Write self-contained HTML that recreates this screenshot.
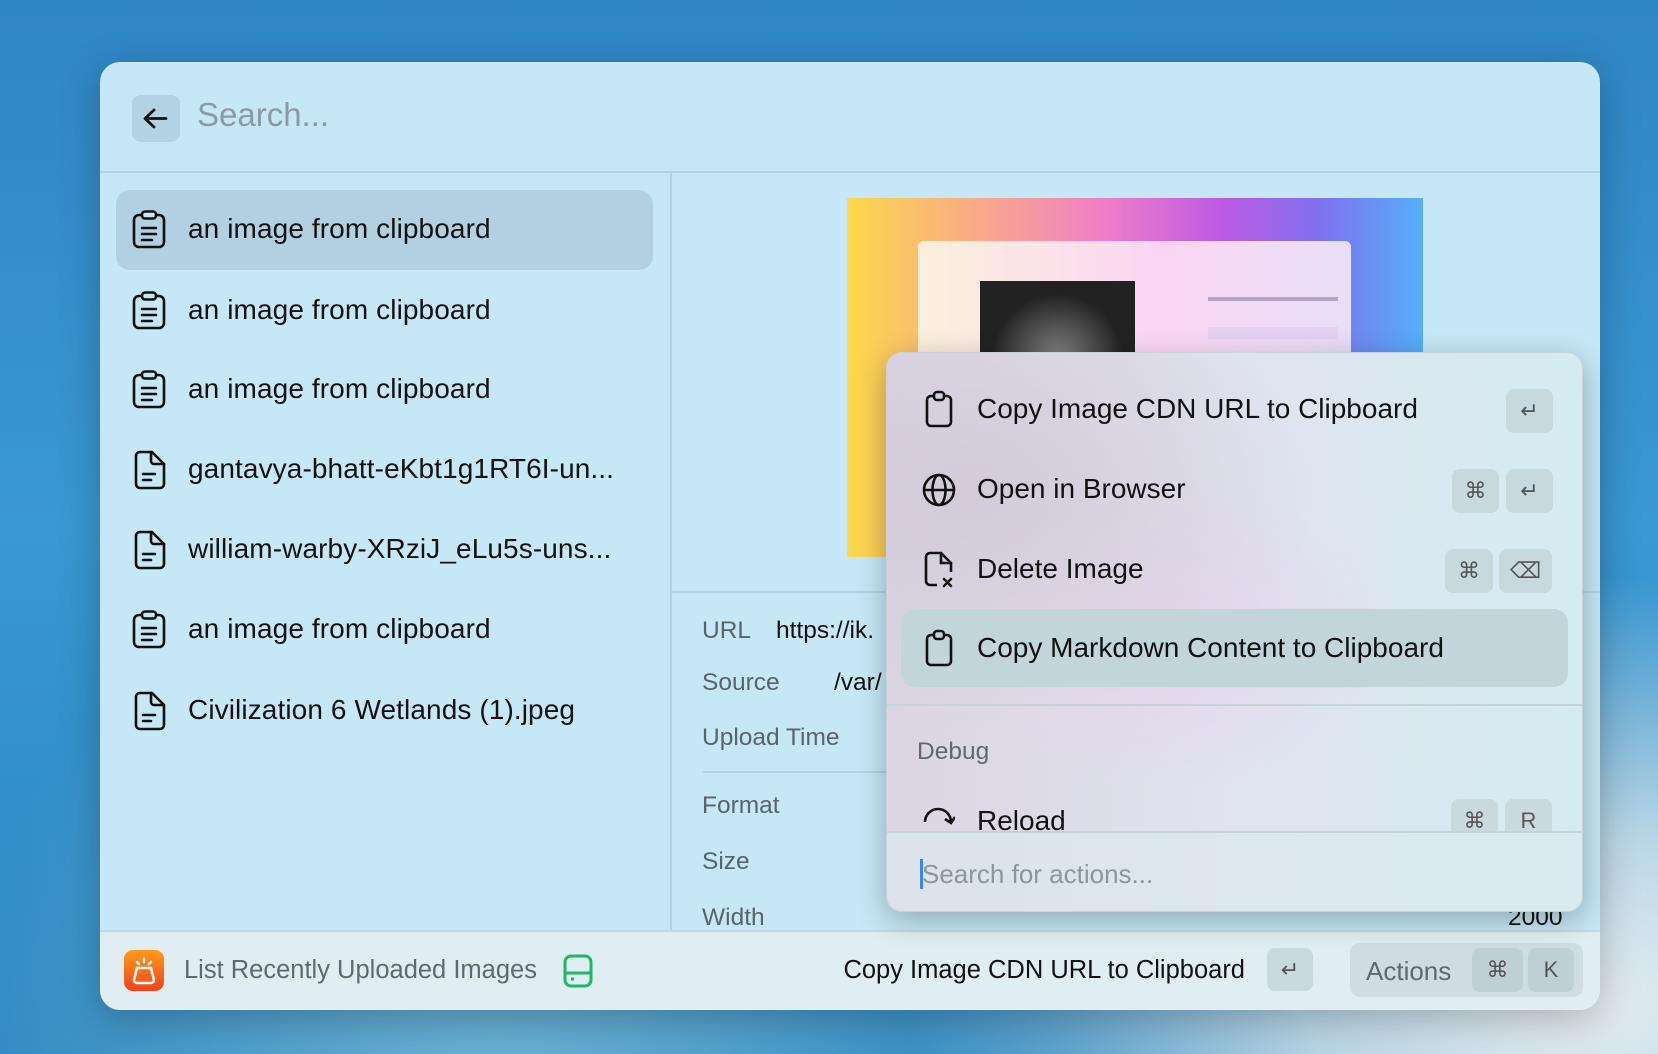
<!DOCTYPE html>
<html><head><meta charset="utf-8"><style>
*{box-sizing:border-box;margin:0;padding:0}
body{width:1658px;height:1054px;overflow:hidden;font-family:"Liberation Sans",sans-serif;position:relative;
background:radial-gradient(ellipse at 95% 95%,#e8eef2 0,#b9d6e6 12%,transparent 30%),radial-gradient(ellipse at 30% 105%,#6fb4d6 0,transparent 35%),linear-gradient(180deg,#2f86c4 0%,#3a98d2 50%,#2a86c0 100%)}
.abs{position:absolute}
.win{left:100px;top:62px;width:1500px;height:948px;border-radius:20px;background:#c6e7f6;overflow:hidden;box-shadow:0 10px 40px rgba(0,0,0,.25)}
.hdr{left:0;top:0;width:1500px;height:111px;border-bottom:2px solid #b2d3e2}
.back{left:32px;top:33px;width:48px;height:47px;border-radius:9px;background:#b2d3e3}
.search{left:97px;top:34px;font-size:33px;color:#8a9ba5}
.vdiv{left:570px;top:111px;width:2px;height:760px;background:#b2d3e2}
.item{position:absolute;left:16px;width:537px;height:80px}
.item.sel{background:#b2d0e1;border-radius:14px}
.item svg{position:absolute;left:16px;top:20px}
.item span{position:absolute;left:72px;top:23px;font-size:28px;color:#111;letter-spacing:.1px}
.lbl{font-size:24.5px;color:#58646b;position:absolute}
.val{font-size:24.5px;color:#111;position:absolute}
.foot{left:0;top:868px;width:1500px;height:80px;background:#e0eef3;border-top:2px solid #c4d8e0}
.kbd{position:absolute;background:#c9d9de;border-radius:8px;color:#555;font-size:22px;text-align:center}
.pop{left:886px;top:352px;width:697px;height:560px;border-radius:16px;overflow:hidden;
background:radial-gradient(ellipse at 12% 25%,#d3cbd8 0,transparent 40%),radial-gradient(ellipse at 40% 50%,#e6d6ec 0,transparent 40%),linear-gradient(90deg,#dcd5e2 0%,#e0e3f0 50%,#d4ecf1 100%);
box-shadow:0 8px 30px rgba(0,0,0,.28);border:1px solid #c7d3da}
.pi{position:absolute;left:14px;width:667px;height:78px}
.pi svg{position:absolute;left:20px;top:20px}
.pi span{position:absolute;left:76px;top:23px;font-size:28px;color:#111}
.pk{position:absolute;top:19px;height:44px;background:#c7d9dc;border-radius:8px;color:#555;font-size:22px;text-align:center;line-height:44px}
</style></head><body>
<div class="abs win">
 <div class="abs hdr">
  <div class="abs back"><svg width="48" height="47" viewBox="0 0 48 47"><path d="M34 23.5H14M22 15l-9 8.5 9 8.5" stroke="#111" stroke-width="2.8" fill="none" stroke-linecap="round" stroke-linejoin="round"/></svg></div>
  <div class="abs search">Search...</div>
 </div>
 <div class="abs vdiv"></div>
 <div class="abs" style="left:0;top:0">
  <svg width="0" height="0" style="position:absolute"><defs>
   <g id="clip"><rect x="2" y="5" width="30" height="32" rx="5" stroke="#111" stroke-width="2.6" fill="none"/><rect x="10" y="1.5" width="14" height="7" rx="3" stroke="#111" stroke-width="2.6" fill="#c6e7f6"/><path d="M10 18h14M10 24h14M10 30h10" stroke="#111" stroke-width="2.6" stroke-linecap="round"/></g>
   <g id="file"><path d="M4 6a4 4 0 0 1 4-4h12l12 12v20a4 4 0 0 1-4 4H8a4 4 0 0 1-4-4z" stroke="#111" stroke-width="2.6" fill="none" stroke-linejoin="round"/><path d="M19 2v9a3 3 0 0 0 3 3h10M11 24h12M11 30h8" stroke="#111" stroke-width="2.6" fill="none" stroke-linecap="round"/></g>
  </defs></svg>
  <div class="item sel" style="top:128px"><svg width="36" height="40"><use href="#clip"/></svg><span>an image from clipboard</span></div>
  <div class="item" style="top:209px"><svg width="36" height="40"><use href="#clip"/></svg><span>an image from clipboard</span></div>
  <div class="item" style="top:288px"><svg width="36" height="40"><use href="#clip"/></svg><span>an image from clipboard</span></div>
  <div class="item" style="top:368px"><svg width="36" height="40"><use href="#file"/></svg><span>gantavya-bhatt-eKbt1g1RT6I-un...</span></div>
  <div class="item" style="top:448px"><svg width="36" height="40"><use href="#file"/></svg><span>william-warby-XRziJ_eLu5s-uns...</span></div>
  <div class="item" style="top:528px"><svg width="36" height="40"><use href="#clip"/></svg><span>an image from clipboard</span></div>
  <div class="item" style="top:609px"><svg width="36" height="40"><use href="#file"/></svg><span>Civilization 6 Wetlands (1).jpeg</span></div>
 </div>
 <div class="abs" style="left:747px;top:136px;width:576px;height:359px;background:linear-gradient(90deg,#fcd94a 0%,#f8a58f 25%,#ee7ec8 45%,#bd5ae4 65%,#7f72ee 82%,#55aefa 100%)">
  <div class="abs" style="left:71px;top:43px;width:433px;height:140px;border-radius:6px;background:linear-gradient(90deg,#fbf0dc,#fbd6f4 55%,#e8def6)">
   <div class="abs" style="left:62px;top:40px;width:155px;height:100px;background:radial-gradient(circle at 50% 80%,#888,#222 60%)"></div>
   <div class="abs" style="left:290px;top:56px;width:130px;height:4px;background:#b7a4c8"></div>
   <div class="abs" style="left:290px;top:86px;width:130px;height:12px;background:#e4d0ef"></div>
  </div>
 </div>
 <div class="abs" style="left:572px;top:529px;width:928px;height:2px;background:#b2d3e2"></div>
 <div class="lbl" style="left:602px;top:555px">URL</div><div class="val" style="left:676px;top:555px">https://ik.</div>
 <div class="lbl" style="left:602px;top:607px">Source</div><div class="val" style="left:734px;top:607px">/var/</div>
 <div class="lbl" style="left:602px;top:662px">Upload Time</div>
 <div class="abs" style="left:602px;top:709px;width:200px;height:2px;background:#b2d3e2"></div>
 <div class="lbl" style="left:602px;top:730px">Format</div>
 <div class="lbl" style="left:602px;top:786px">Size</div>
 <div class="lbl" style="left:602px;top:842px">Width</div><div class="val" style="left:1408px;top:842px">2000</div>
 <div class="abs foot">
  <div class="abs" style="left:24px;top:18px;width:40px;height:41px;border-radius:9px;background:linear-gradient(180deg,#ff9a1a,#f4431c)">
   <svg width="40" height="41"><path d="M13 18h14l3 12a3 3 0 0 1-3 3H13a3 3 0 0 1-3-3z" stroke="#fff" stroke-width="2.5" fill="none"/><path d="M20 9v3M13 12l2 2M27 12l-2 2" stroke="#fff" stroke-width="2.5" stroke-linecap="round"/></svg>
  </div>
  <div class="abs" style="left:84px;top:24px;font-size:25.5px;color:#5e6a70">List Recently Uploaded Images</div>
  <svg class="abs" style="left:463px;top:22px" width="30" height="34"><rect x="2" y="2" width="26" height="30" rx="6" stroke="#1fb766" stroke-width="3" fill="none"/><path d="M2 19h26M8 25h3" stroke="#1fb766" stroke-width="3"/></svg>
  <div class="abs" style="left:700px;top:24px;font-size:25.5px;color:#111;width:445px;text-align:right">Copy Image CDN URL to Clipboard</div>
  <div class="kbd" style="left:1167px;top:16px;width:46px;height:43px;line-height:43px">↵</div>
  <div class="abs" style="left:1250px;top:11px;width:233px;height:54px;border-radius:10px;background:#cfdde2">
   <div class="abs" style="left:16px;top:13px;font-size:26px;color:#5e6a70">Actions</div>
   <div class="kbd" style="left:122px;top:5px;width:51px;height:44px;line-height:44px;background:#bfd0d5">⌘</div>
   <div class="kbd" style="left:178px;top:5px;width:46px;height:44px;line-height:44px;background:#bfd0d5">K</div>
  </div>
 </div>
</div>
<div class="abs pop">
 <div class="pi" style="top:17px"><svg width="36" height="40"><path d="M6 10a4 4 0 0 1 4-4h4M22 6h4a4 4 0 0 1 4 4v22a4 4 0 0 1-4 4H10a4 4 0 0 1-4-4V10" stroke="#111" stroke-width="2.6" fill="none"/><rect x="13" y="2" width="10" height="8" rx="3" stroke="#111" stroke-width="2.6" fill="none"/></svg><span>Copy Image CDN URL to Clipboard</span><div class="pk" style="left:605px;width:47px">↵</div></div>
 <div class="pi" style="top:97px"><svg width="36" height="40"><circle cx="18" cy="20" r="15" stroke="#111" stroke-width="2.6" fill="none"/><ellipse cx="18" cy="20" rx="6.5" ry="15" stroke="#111" stroke-width="2.6" fill="none"/><path d="M3 20h30" stroke="#111" stroke-width="2.6"/></svg><span>Open in Browser</span><div class="pk" style="left:551px;width:47px">⌘</div><div class="pk" style="left:605px;width:47px">↵</div></div>
 <div class="pi" style="top:177px"><svg width="36" height="40"><path d="M16 35H9a4 4 0 0 1-4-4V7a4 4 0 0 1 4-4h11l10 10v9" stroke="#111" stroke-width="2.6" fill="none" stroke-linejoin="round"/><path d="M20 3v10h10M23 29l7 7M30 29l-7 7" stroke="#111" stroke-width="2.6" fill="none" stroke-linecap="round"/></svg><span>Delete Image</span><div class="pk" style="left:544px;width:48px">⌘</div><div class="pk" style="left:598px;width:53px">⌫</div></div>
 <div class="pi" style="top:256px;background:#c2d5db;border-radius:14px"><svg width="36" height="40"><path d="M6 10a4 4 0 0 1 4-4h4M22 6h4a4 4 0 0 1 4 4v22a4 4 0 0 1-4 4H10a4 4 0 0 1-4-4V10" stroke="#111" stroke-width="2.6" fill="none"/><rect x="13" y="2" width="10" height="8" rx="3" stroke="#111" stroke-width="2.6" fill="none"/></svg><span>Copy Markdown Content to Clipboard</span></div>
 <div class="abs" style="left:0;top:351px;width:697px;height:2px;background:#c3d3d8"></div>
 <div class="abs" style="left:30px;top:385px;font-size:24.5px;color:#5e6a70">Debug</div>
 <div class="abs" style="left:0;top:440px;width:697px;height:38px;overflow:hidden">
  <svg class="abs" style="left:34px;top:12px" width="34" height="34"><path d="M4 17a13 13 0 1 1 26 0" stroke="#111" stroke-width="2.6" fill="none"/><path d="M24 14l6 4 4-6" stroke="#111" stroke-width="2.6" fill="none"/></svg>
  <div class="abs" style="left:90px;top:12px;font-size:28px;color:#111">Reload</div>
  <div class="kbd" style="left:564px;top:6px;width:47px;height:44px;line-height:44px">⌘</div>
  <div class="kbd" style="left:618px;top:6px;width:47px;height:44px;line-height:44px">R</div>
 </div>
 <div class="abs" style="left:0;top:478px;width:697px;height:2px;background:#c3d3d8"></div>
 <div class="abs" style="left:0;top:480px;width:697px;height:80px;background:rgba(220,235,238,.6)"></div>
 <div class="abs" style="left:33px;top:506px;width:3px;height:30px;background:#3b82f6"></div>
 <div class="abs" style="left:35px;top:506px;font-size:26px;color:#8a979d">Search for actions...</div>
</div>
</body></html>
